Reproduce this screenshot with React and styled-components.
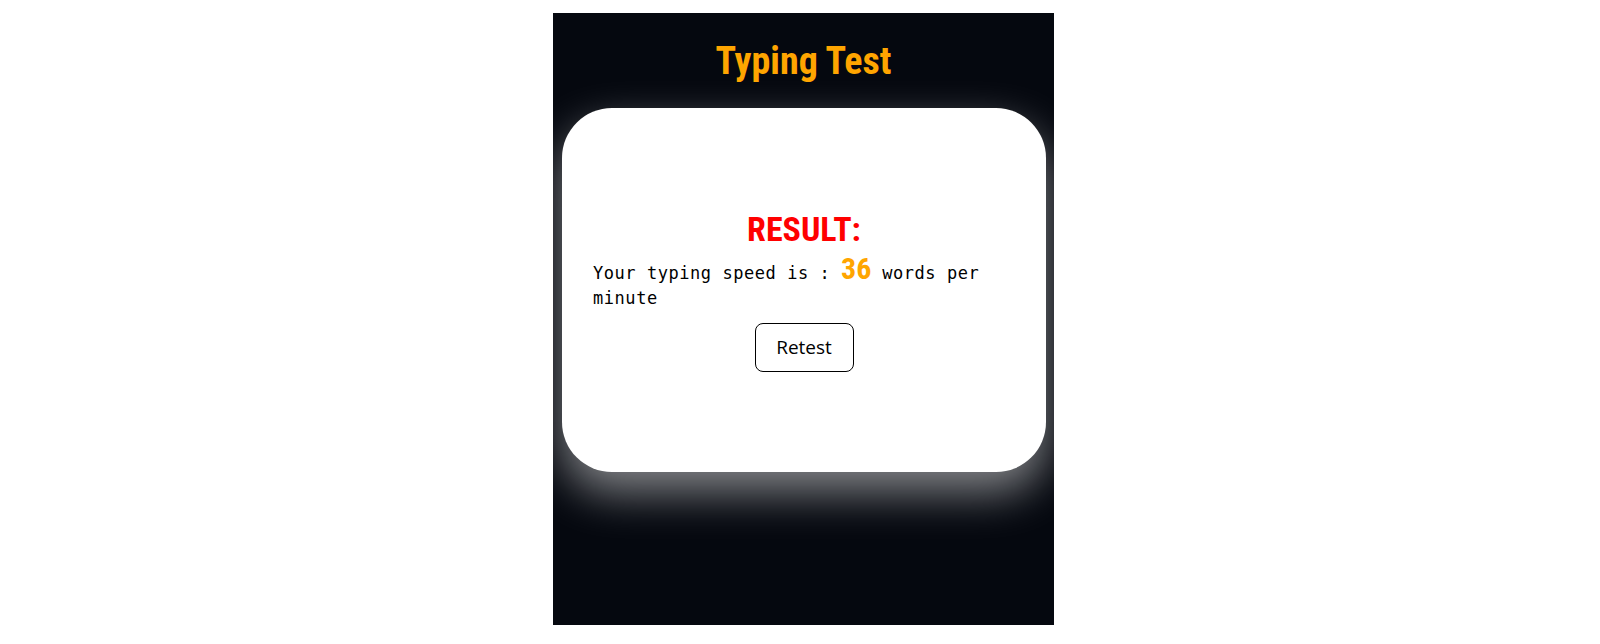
import React from "react";
import styled, { createGlobalStyle } from "styled-components";

const GlobalStyle = createGlobalStyle`
  html, body {
    margin: 0;
    padding: 0;
    background: #ffffff;
  }
`;

const Page = styled.div`
  display: flex;
  justify-content: center;
  padding: 13px 0 0 7px;
`;

const Panel = styled.div`
  width: 501px;
  height: 612px;
  background: #05080f;
  overflow: hidden;
  display: flex;
  flex-direction: column;
`;

const Title = styled.h1`
  margin: 0;
  padding-top: 26px;
  font-family: Roboto, "Liberation Sans", sans-serif;
  font-stretch: condensed;
  font-weight: 700;
  font-size: 38px;
  line-height: 44px;
  color: #ffa500;
  text-align: center;
`;

const Card = styled.div`
  margin: 25px 8px 0 9px;
  height: 364px;
  background: #ffffff;
  border-radius: 50px;
  box-shadow: 0 20px 45px rgba(255, 255, 255, 0.5);
  padding: 0 31px;
  display: flex;
  flex-direction: column;
  justify-content: center;
`;

const ResultHeading = styled.h2`
  margin: 0 0 7px;
  font-family: Roboto, "Liberation Sans", sans-serif;
  font-stretch: condensed;
  font-weight: 700;
  font-size: 34px;
  line-height: 40px;
  color: #ff0000;
  text-align: center;
`;

const SpeedText = styled.p`
  margin: 0 0 12px;
  font-family: "DejaVu Sans Mono", monospace;
  font-size: 17px;
  line-height: 25px;
  letter-spacing: 0.55px;
  color: #000000;
`;

const Wpm = styled.span`
  font-family: Roboto, "Liberation Sans", sans-serif;
  font-stretch: condensed;
  font-weight: 700;
  font-size: 30px;
  letter-spacing: 0;
  color: #ffa500;
`;

const RetestButton = styled.button`
  align-self: center;
  width: 99px;
  height: 49px;
  background: #ffffff;
  border: 1px solid #000000;
  border-radius: 8px;
  font-family: "Open Sans", sans-serif;
  font-size: 19px;
  color: #000000;
  cursor: pointer;
`;

export default function App() {
  return (
    <>
      <GlobalStyle />
      <Page>
        <Panel>
          <Title>Typing Test</Title>
          <Card>
            <ResultHeading>RESULT:</ResultHeading>
            <SpeedText>
              Your typing speed is : <Wpm>36</Wpm> words per minute
            </SpeedText>
            <RetestButton>Retest</RetestButton>
          </Card>
        </Panel>
      </Page>
    </>
  );
}
